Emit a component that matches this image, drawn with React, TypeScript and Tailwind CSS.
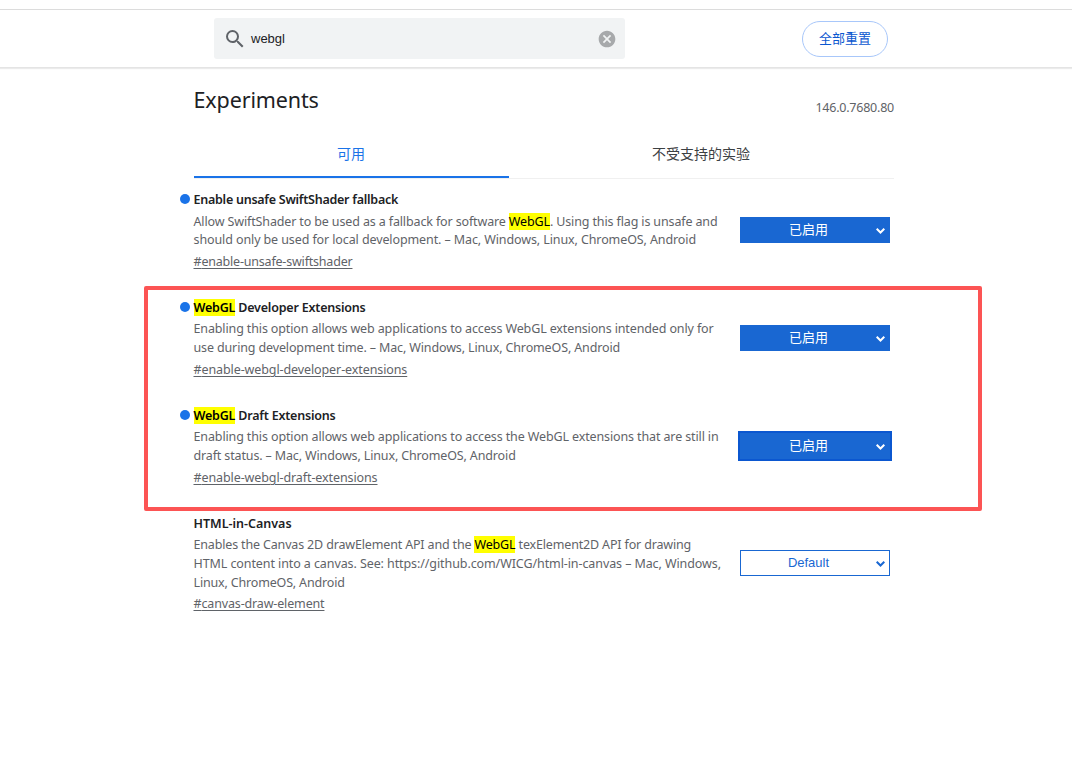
import type { ReactNode } from 'react';
import clsx from 'clsx';

interface Line {
  text: string;
  className?: string;
}

interface Experiment {
  id: string;
  title: string;
  titleClass?: string;
  lines: Line[];
  markDescription?: boolean;
  linkClass?: string;
  value: string;
  enabled: boolean;
  focused?: boolean;
}

const EXPERIMENTS: Experiment[] = [
  {
    id: 'enable-unsafe-swiftshader',
    title: 'Enable unsafe SwiftShader fallback',
    titleClass: 'tracking-[-0.25px]',
    lines: [
      {
        text: 'Allow SwiftShader to be used as a fallback for software WebGL. Using this flag is unsafe and',
        className: 'tracking-[-0.135px] pt-px -mb-px',
      },
      {
        text: 'should only be used for local development. – Mac, Windows, Linux, ChromeOS, Android',
        className: 'tracking-[-0.105px]',
      },
    ],
    markDescription: true,
    linkClass: 'mt-[3px] tracking-[-0.2px]',
    value: '已启用',
    enabled: true,
  },
  {
    id: 'enable-webgl-developer-extensions',
    title: 'WebGL Developer Extensions',
    titleClass: 'tracking-[-0.2px]',
    lines: [
      {
        text: 'Enabling this option allows web applications to access WebGL extensions intended only for',
        className: 'tracking-[-0.13px]',
      },
      {
        text: 'use during development time. – Mac, Windows, Linux, ChromeOS, Android',
        className: 'tracking-[-0.135px]',
      },
    ],
    linkClass: 'mt-[3px] tracking-[-0.1px]',
    value: '已启用',
    enabled: true,
  },
  {
    id: 'enable-webgl-draft-extensions',
    title: 'WebGL Draft Extensions',
    titleClass: 'tracking-[-0.2px]',
    lines: [
      {
        text: 'Enabling this option allows web applications to access the WebGL extensions that are still in',
        className: 'tracking-[-0.125px]',
      },
      {
        text: 'draft status. – Mac, Windows, Linux, ChromeOS, Android',
        className: 'tracking-[-0.14px]',
      },
    ],
    linkClass: 'mt-[3px] tracking-[-0.1px]',
    value: '已启用',
    enabled: true,
    focused: true,
  },
  {
    id: 'canvas-draw-element',
    title: 'HTML-in-Canvas',
    lines: [
      {
        text: 'Enables the Canvas 2D drawElement API and the WebGL texElement2D API for drawing',
        className: 'tracking-[-0.16px]',
      },
      {
        text: 'HTML content into a canvas. See: https://github.com/WICG/html-in-canvas – Mac, Windows,',
        className: 'tracking-[-0.09px]',
      },
      { text: 'Linux, ChromeOS, Android', className: 'tracking-[-0.17px] pt-[0.5px]' },
    ],
    markDescription: true,
    linkClass: 'mt-[1.5px] tracking-[-0.15px]',
    value: 'Default',
    enabled: false,
  },
];

function highlight(text: string): ReactNode {
  return text.split(/(WebGL)/).map((part, i) =>
    part === 'WebGL' ? (
      <mark key={i} className="bg-[#ffff00] text-black">{part}</mark>
    ) : (
      part
    )
  );
}

function ExperimentRow({ item }: { item: Experiment }) {
  return (
    <div className="flex h-[108px] items-start">
      <div className="flex h-5 w-[13.5px] shrink-0 items-center">
        {item.enabled && <span className="size-[10px] shrink-0 rounded-full bg-[#1a73e8]" />}
      </div>
      <div className="w-[546.5px] shrink-0 pt-px whitespace-nowrap">
        <h3 className={clsx('text-[12.5px] leading-5 font-semibold text-[#202124]', item.titleClass)}>
          {highlight(item.title)}
        </h3>
        <div className="mt-[2px] text-[12.5px] leading-[18.7px] text-[#5f6368]">
          {item.lines.map((line) => (
            <p key={line.text} className={line.className}>
              {item.markDescription ? highlight(line.text) : line.text}
            </p>
          ))}
        </div>
        <a
          href={`#${item.id}`}
          className={clsx('block text-[12.5px] leading-[19px] text-[#5f6368] underline underline-offset-2', item.linkClass)}
        >
          #{item.id}
        </a>
      </div>
      <button
        className={clsx(
          'flex h-[26px] w-[150px] shrink-0 items-center border border-[#1967d2] pr-1 text-[13px]',
          item.enabled ? 'mt-7 bg-[#1967d2] text-white' : 'mt-[37px] bg-white text-[#1967d2]',
          item.focused && 'outline-2 outline-[#0b57d0]'
        )}
      >
        <span className="flex-1 text-center font-['Liberation_Sans','Noto_Sans_CJK_SC',sans-serif]">{item.value}</span>
        <svg width="9" height="6" viewBox="0 0 9 6" fill="none" stroke="currentColor" strokeWidth="2" className="mt-[2px]">
          <path d="M0.7 0.8 4.5 4.5 8.3 0.8" />
        </svg>
      </button>
    </div>
  );
}

export default function App() {
  return (
    <div className="relative h-[757px] w-[1072px] overflow-hidden bg-white pt-[9px] font-['Noto_Sans','Noto_Sans_CJK_SC',sans-serif]">
      {/* Search bar */}
      <header className="flex h-[59px] items-center border-t border-b border-t-[#dcdcdc] border-b-[#e4e4e4] pl-[214px] shadow-[0_1px_1px_rgba(0,0,0,0.08)]">
        <div className="flex h-[41px] w-[411px] items-center rounded-[3px] bg-[#f1f3f4] pr-[8px] pl-[9px]">
          <svg width="24" height="24" viewBox="0 0 24 24" fill="#5f6368">
            <path d="M15.5 14h-.79l-.28-.27A6.471 6.471 0 0 0 16 9.5 6.5 6.5 0 1 0 9.5 16c1.61 0 3.09-.59 4.23-1.57l.27.28v.79l5 4.99L20.49 19l-4.99-5zm-6 0C7.01 14 5 11.99 5 9.5S7.01 5 9.5 5 14 7.01 14 9.5 11.99 14 9.5 14z" />
          </svg>
          <span className="ml-1 flex-1 font-['Liberation_Sans',sans-serif] text-[13px] text-[#202124]">webgl</span>
          <svg width="20" height="20" viewBox="0 0 24 24" fill="#a7a9ab">
            <path d="M12 2C6.47 2 2 6.47 2 12s4.47 10 10 10 10-4.47 10-10S17.53 2 12 2zm5 13.59L15.59 17 12 13.41 8.41 17 7 15.59 10.59 12 7 8.41 8.41 7 12 10.59 15.59 7 17 8.41 13.41 12 17 15.59z" />
          </svg>
        </div>
        <button className="ml-[177px] h-9 w-[86px] rounded-full border border-[#a8c7fa] text-[13px] text-[#0b57d0]">
          全部重置
        </button>
      </header>

      <main className="ml-[180px] w-[714px]">
        <div className="flex h-[62px] justify-between pl-[13.5px]">
          <h1 className="mt-[16px] text-[21.5px] leading-8 tracking-[-0.13px] text-[#202124]">Experiments</h1>
          <span className="mt-[30px] text-[12.5px] leading-5 tracking-[-0.23px] text-[#5f6368]">146.0.7680.80</span>
        </div>

        <div className="ml-[14px] flex h-[49px] w-[700px] border-b border-[#f0f0f0] text-[14px]">
          <div className="flex w-[315px] items-center justify-center border-b-2 border-[#1a73e8] pr-px text-[#1a73e8]">可用</div>
          <div className="flex flex-1 items-center justify-center pr-px pb-[2px] text-[#3c4043]">不受支持的实验</div>
        </div>

        <div className="pt-[10px]">
          {EXPERIMENTS.map((item) => (
            <ExperimentRow key={item.id} item={item} />
          ))}
        </div>
      </main>

      {/* Annotation frame over the WebGL extension flags */}
      <div className="pointer-events-none absolute top-[286px] left-[144px] h-[225px] w-[838px] rounded-[2px] border-4 border-[#fc5454]" />
    </div>
  );
}
